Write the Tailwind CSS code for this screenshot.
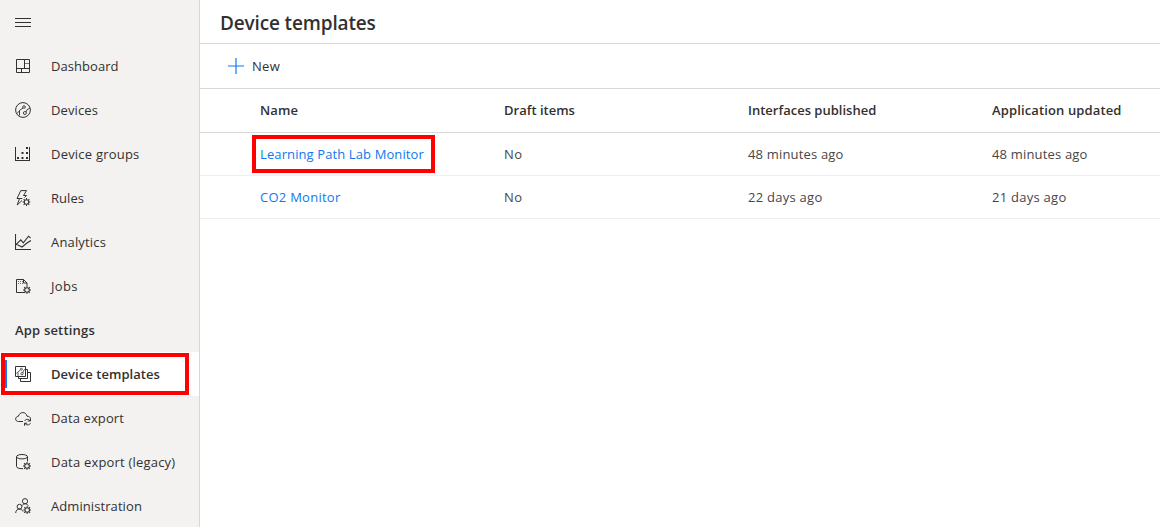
<!DOCTYPE html>
<html lang="en">
<head>
<meta charset="utf-8">
<title>Device templates</title>
<script src="https://cdn.jsdelivr.net/npm/@tailwindcss/browser@4"></script>
</head>
<body class="flex h-[527px] w-[1160px] overflow-hidden bg-white font-['Open_Sans','Noto_Sans',sans-serif] text-[13px] leading-5 text-[#323130]">
<svg class="hidden">
  <symbol id="gear" viewBox="0 0 7 7">
    <circle cx="3.5" cy="3.5" r="2" fill="none" stroke="currentColor" stroke-width=".9"/>
    <path d="M3.5 0v1.4M3.5 5.6V7M0 3.500h1.400M5.600 3.500H7M1 1l1 1M5 5l1 1M6 1L5 2M2 5L1 6" stroke="currentColor" stroke-width=".9"/>
  </symbol>
</svg>
<nav class="relative h-[528px] w-[200px] shrink-0 border-r border-[#d8d7d6] bg-[#f3f2f1]">
  <div class="flex h-11 items-center pl-[15px]">
    <svg class="size-4" viewBox="0 0 16 16" stroke="currentColor"><path d="M0 4.5h16M0 8.5h16M0 12.5h16"/></svg>
  </div>
  <div class="flex h-11 items-center gap-5 pl-[15px]">
    <svg class="size-4" viewBox="0 0 16 16" fill="none" stroke="currentColor"><path d="M1.5 1.5h13v13h-13zM1 10.5h14M9.500 1v9.500M6.500 10.500v4"/><path d="M9.500 5.500h5" stroke-opacity=".65"/></svg>
    <span class="tracking-[0.05px]">Dashboard</span>
  </div>
  <div class="flex h-11 items-center gap-5 pl-[15px]">
    <svg class="size-4" viewBox="0 0 16 16" fill="none" stroke="currentColor"><circle cx="8" cy="8" r="7.4"/><g stroke-width=".9"><circle cx="9" cy="5" r="1.300"/><circle cx="9.900" cy="11" r="1.500"/><path d="M8 6L4.500 8.300v5.200M4.500 8.800L2 11.500M11 10l1-2.300 3-1.700"/></g></svg>
    <span class="tracking-[0.11px]">Devices</span>
  </div>
  <div class="flex h-11 items-center gap-5 pl-[15px]">
    <svg class="size-4" viewBox="0 0 16 16" fill="currentColor"><path d="M0 1h1v13h13V1h1v14H0zM2 11h2v2H2zM6.500 11h2v2h-2zM11 11h2v2h-2zM6.500 6h2v2h-2zM11 6h2v2h-2zM11 1h2v2h-2z"/></svg>
    <span class="tracking-[0.21px]">Device groups</span>
  </div>
  <div class="flex h-11 items-center gap-5 pl-[15px]">
    <svg class="size-4" viewBox="0 0 16 16" fill="none" stroke="currentColor"><path d="M11.500.600H5.800L2 8.500h2.500L2.200 15l4.800-4.500M11.500.600L8.500 5.500h3L9.500 7.600M4.500 8.500h2.800"/><use href="#gear" x="7.500" y="8" width="8" height="8"/></svg>
    <span class="tracking-[0.05px]">Rules</span>
  </div>
  <div class="flex h-11 items-center gap-5 pl-[15px]">
    <svg class="size-4" viewBox="0 0 16 16" fill="none" stroke="currentColor" stroke-width="1.100"><path d="M.500 0v15.500H16M.800 10.800l5-5 2.500 3L13.500 2.200l2 1.800M1 10l2.500 1.300L7 13l5-4 4-2.500"/></svg>
    <span class="tracking-[0.16px]">Analytics</span>
  </div>
  <div class="flex h-11 items-center gap-5 pl-[15px]">
    <svg class="size-4" viewBox="0 0 16 16" fill="none" stroke="currentColor"><path d="M9 14.500H1.500v-13h7l3.500 3.500v3M8.500 1.500V5H12"/><path d="M3 3.500h5M3 5.500h5" stroke-dasharray="1 1" stroke-opacity=".7"/><use href="#gear" x="8" y="8" width="8" height="8"/></svg>
    <span class="tracking-[0.3px]">Jobs</span>
  </div>
  <div class="flex h-11 items-center pl-[15px] font-semibold tracking-[0.19px]">App settings</div>
  <div class="relative flex h-11 items-center gap-5 bg-white pl-[15px] font-semibold">
    <div class="absolute left-[5px] top-2 h-7 w-[2px] bg-[#0f78f0]"></div>
    <svg class="size-4" viewBox="0 0 16 16" fill="none" stroke="currentColor"><path d="M.500.500h10v10H.500zM3.500 11v1.500h9V3.500H11M5.500 13v2.500h10V6.500H13"/><g stroke-width=".8"><circle cx="6.400" cy="3.200" r="1"/><circle cx="7" cy="7.700" r="1.200"/><path d="M5.500 4L1.300 7.400M3 6.500v4M7.800 6.900l.700-2.400 2-1.500"/></g></svg>
    <span class="tracking-[0.05px]">Device templates</span>
    <div class="absolute left-[1px] top-[1px] h-[42px] w-[188px] border-4 border-[#ff0000]"></div>
  </div>
  <div class="flex h-11 items-center gap-5 pl-[15px]">
    <svg class="size-4" viewBox="0 0 16 16" fill="none" stroke="currentColor"><path d="M8 11.500H3.500C-.300 11.500-.300 6.500 3.500 6.200 4.500 1.500 11 1.200 12 6.200c2 0 3.500 1 3.500 2.500"/><path d="M9.500 11c1-2 4.500-2.400 5.700 0M15.500 8.500V11h-2.700M15.500 13.200c-1 2-4.500 2.400-5.700 0M9.500 15.700v-2.500h2.700"/></svg>
    <span class="tracking-[0.12px]">Data export</span>
  </div>
  <div class="flex h-11 items-center gap-5 pl-[15px]">
    <svg class="size-4" viewBox="0 0 16 16" fill="none" stroke="currentColor"><ellipse cx="7" cy="2.700" rx="5.500" ry="2.200"/><path d="M1.500 2.700v9.800c0 1.300 2.500 2.200 5.500 2.200h1M12.500 2.700V7.500"/><use href="#gear" x="8" y="8" width="8" height="8"/></svg>
    <span class="tracking-[0.2px]">Data export (legacy)</span>
  </div>
  <div class="flex h-11 items-center gap-5 pl-[15px]">
    <svg class="size-4" viewBox="0 0 16 16" fill="none" stroke="currentColor"><circle cx="10" cy="3.200" r="2.600"/><circle cx="4.500" cy="8.700" r="2.400"/><path d="M.700 15c.100-5 6.300-5 7.200-1.500M7 7.700C8.500 5 12.300 5.500 13.200 7.700"/><use href="#gear" x="8.200" y="8" width="8" height="8"/></svg>
    <span class="tracking-[0.08px]">Administration</span>
  </div>
</nav>
<main class="flex min-w-0 flex-1 flex-col">
  <h1 class="flex h-11 items-center border-b border-[#d8d7d6] pl-5 pt-[3px] text-[19px] font-semibold tracking-[-0.15px]">Device templates</h1>
  <div class="flex h-[45px] items-center gap-2 border-b border-[#d8d7d6] pl-7">
    <svg class="size-4" viewBox="0 0 16 16" stroke="#0f78f0"><path d="M0 8h16M8 0v16" stroke-width="1.200"/></svg>
    <span class="tracking-[0.28px]">New</span>
  </div>
  <div class="grid h-11 grid-cols-[244px_244px_244px_1fr] items-center border-b border-[#d8d7d6] pb-px pl-[60px] font-semibold">
    <span class="tracking-[0.1px]">Name</span><span>Draft items</span><span>Interfaces published</span><span class="tracking-[0.13px]">Application updated</span>
  </div>
  <div class="relative grid h-[43px] grid-cols-[244px_244px_244px_1fr] items-center border-b border-[#f0efee] pl-[60px] tracking-[0.17px] text-[#484644]">
    <a class="tracking-[0.11px] text-[#0f78f0]">Learning Path Lab Monitor</a><span class="tracking-[0.4px]">No</span><span>48 minutes ago</span><span>48 minutes ago</span>
    <div class="absolute left-[52px] top-[2px] h-[38px] w-[183px] border-4 border-[#ff0000]"></div>
  </div>
  <div class="grid h-[43px] grid-cols-[244px_244px_244px_1fr] items-center border-b border-[#f0efee] pl-[60px] tracking-[0.26px] text-[#484644]">
    <a class="text-[#0f78f0]">CO2 Monitor</a><span class="tracking-[0.4px]">No</span><span>22 days ago</span><span>21 days ago</span>
  </div>
</main>
</body>
</html>
